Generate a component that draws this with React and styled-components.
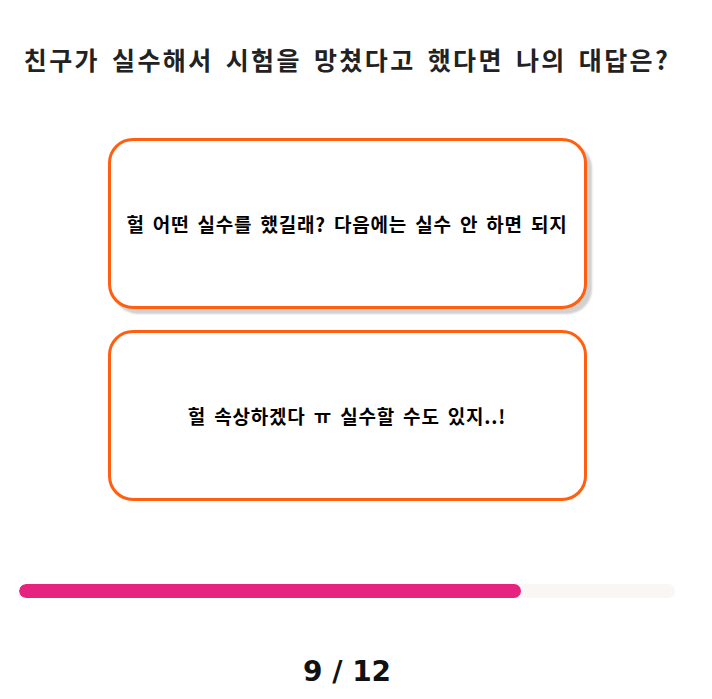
import React from "react";
import styled, { createGlobalStyle } from "styled-components";

const Global = createGlobalStyle`
  html, body { margin: 0; padding: 0; background: #fff; }
  body { font-family: "Noto Sans CJK KR", "Noto Sans", sans-serif; }
`;

const Page = styled.div`
  width: 694px;
  display: flex;
  flex-direction: column;
  align-items: center;
`;

const Title = styled.h1`
  margin: 41px 0 0;
  font-size: 25px;
  line-height: 36px;
  font-weight: 700;
  color: #222;
  letter-spacing: 2.4px;
  word-spacing: 4px;
  white-space: nowrap;
`;

const Options = styled.div`
  margin-top: 61px;
  display: flex;
  flex-direction: column;
  gap: 21px;
`;

const Option = styled.button`
  width: 479px;
  height: 171px;
  box-sizing: border-box;
  border: 3px solid #ff5f0f;
  border-radius: 25px;
  background: #fff;
  display: flex;
  align-items: center;
  justify-content: center;
  font-family: inherit;
  font-size: 19px;
  font-weight: 700;
  color: #000;
  letter-spacing: 0.8px;
  word-spacing: 3px;
  white-space: nowrap;
  box-shadow: ${(p) => (p.$active ? "5px 5px 2px rgba(0,0,0,0.18)" : "none")};
  cursor: pointer;
  padding: 0;
`;

const Track = styled.div`
  margin-top: 83px;
  width: 656px;
  height: 14px;
  border-radius: 7px;
  background: #faf6f3;
  overflow: hidden;
`;

const Fill = styled.div`
  height: 100%;
  border-radius: 7px;
  background: #e6237f;
`;

const Counter = styled.div`
  margin-top: 54px;
  font-family: "DejaVu Sans", "Noto Sans", sans-serif;
  font-size: 28px;
  font-weight: 700;
  color: #111;
  line-height: 40px;
`;

export default function App() {
  const current = 9;
  const total = 12;
  return (
    <>
      <Global />
      <Page>
        <Title>친구가 실수해서 시험을 망쳤다고 했다면 나의 대답은?</Title>
        <Options>
          <Option $active>헐 어떤 실수를 했길래? 다음에는 실수 안 하면 되지</Option>
          <Option>헐 속상하겠다 ㅠ 실수할 수도 있지..!</Option>
        </Options>
        <Track>
          <Fill style={{ width: `${(502 / 656) * 100}%` }} />
        </Track>
        <Counter>
          {current} / {total}
        </Counter>
      </Page>
    </>
  );
}
